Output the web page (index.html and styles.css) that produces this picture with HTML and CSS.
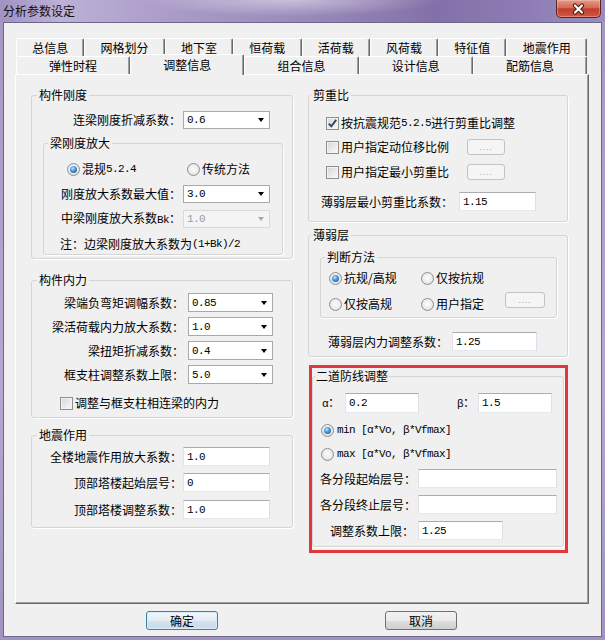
FILE: index.html
```html
<!DOCTYPE html>
<html lang="zh-CN">
<head>
    <meta charset="UTF-8">
    <title>分析参数设定</title>
    <link rel="stylesheet" href="styles.css">
</head>
<body>
<div class="window">
    <div class="titlebar">
        <span class="title">分析参数设定</span>
        <button class="close" type="button">
            <svg width="17" height="12" viewBox="0 0 17 12">
                <path d="M5 2.5 L12 9.5 M12 2.5 L5 9.5" stroke="#4a1610" stroke-width="4.2" stroke-linecap="round"/>
                <path d="M5 2.5 L12 9.5 M12 2.5 L5 9.5" stroke="#fff" stroke-width="2.2" stroke-linecap="round"/>
            </svg>
        </button>
    </div>

    <div class="client">
        <div class="tabstrip">
            <div class="tabrow">
                <div class="tab">总信息</div>
                <div class="tab wide">网格划分</div>
                <div class="tab">地下室</div>
                <div class="tab">恒荷载</div>
                <div class="tab">活荷载</div>
                <div class="tab">风荷载</div>
                <div class="tab">特征值</div>
                <div class="tab wide">地震作用</div>
            </div>
            <div class="tabrow">
                <div class="tab">弹性时程</div>
                <div class="tab on">调整信息</div>
                <div class="tab">组合信息</div>
                <div class="tab">设计信息</div>
                <div class="tab">配筋信息</div>
            </div>
        </div>

        <div class="panel">
            <!-- left column -->
            <div class="col-left">
                <fieldset class="grp">
                    <legend>构件刚度</legend>
                    <div class="row h18 mt9">
                        <span class="lbl w149">连梁刚度折减系数：</span>
                        <div class="combo w87 ml2"><span class="val">0.6</span><i></i></div>
                    </div>
                    <fieldset class="grp sub beam">
                        <legend>梁刚度放大</legend>
                        <div class="row h16 mt11 pl23">
                            <label class="opt w120"><span class="radio on"></span>混规<span class="en">5.2.4</span></label>
                            <label class="opt"><span class="radio"></span>传统方法</label>
                        </div>
                        <div class="row h18 mt8">
                            <span class="lbl w137">刚度放大系数最大值：</span>
                            <div class="combo w87 ml2"><span class="val">3.0</span><i></i></div>
                        </div>
                        <div class="row h18 mt7">
                            <span class="lbl w137">中梁刚度放大系数<span class="en">Bk</span>：</span>
                            <div class="combo w87 ml2 disabled"><span class="val">1.0</span><i></i></div>
                        </div>
                        <div class="row h16 mt8 pl16">注：边梁刚度放大系数为<span class="en">(1+Bk)/2</span></div>
                    </fieldset>
                </fieldset>

                <fieldset class="grp mt14 pb6">
                    <legend>构件内力</legend>
                    <div class="row h19 mt6">
                        <span class="lbl w152">梁端负弯矩调幅系数：</span>
                        <div class="combo w85 ml4 h19"><span class="val">0.85</span><i></i></div>
                    </div>
                    <div class="row h19 mt5">
                        <span class="lbl w152">梁活荷载内力放大系数：</span>
                        <div class="combo w85 ml4 h19"><span class="val">1.0</span><i></i></div>
                    </div>
                    <div class="row h19 mt5">
                        <span class="lbl w152">梁扭矩折减系数：</span>
                        <div class="combo w85 ml4 h19"><span class="val">0.4</span><i></i></div>
                    </div>
                    <div class="row h19 mt5">
                        <span class="lbl w152">框支柱调整系数上限：</span>
                        <div class="combo w85 ml4 h19"><span class="val">5.0</span><i></i></div>
                    </div>
                    <div class="row h16 mt11 pl28">
                        <label class="opt"><span class="check"></span>调整与框支柱相连梁的内力</label>
                    </div>
                </fieldset>

                <fieldset class="grp mt10 pb8">
                    <legend>地震作用</legend>
                    <div class="row h19 mt5">
                        <span class="lbl w150">全楼地震作用放大系数：</span>
                        <div class="edit w87 ml1"><span class="val">1.0</span></div>
                    </div>
                    <div class="row h19 mt7">
                        <span class="lbl w150">顶部塔楼起始层号：</span>
                        <div class="edit w87 ml1"><span class="val">0</span></div>
                    </div>
                    <div class="row h19 mt8">
                        <span class="lbl w150">顶部塔楼调整系数：</span>
                        <div class="edit w87 ml1"><span class="val">1.0</span></div>
                    </div>
                </fieldset>
            </div>

            <!-- right column -->
            <div class="col-right">
                <fieldset class="grp pb10">
                    <legend>剪重比</legend>
                    <div class="row h18 mt12 pl17">
                        <label class="opt"><span class="check"><svg width="11" height="11" viewBox="0 0 11 11"><path d="M1.8 5.6 L4.3 8.3 L9.2 1.9" fill="none" stroke="#34426e" stroke-width="1.9"/></svg></span>按抗震规范<span class="en">5.2.5</span>进行剪重比调整</label>
                    </div>
                    <div class="row h18 mt6 pl17">
                        <label class="opt w141"><span class="check"></span>用户指定动位移比例</label>
                        <span class="dots">....</span>
                    </div>
                    <div class="row h18 mt7 pl17">
                        <label class="opt w141"><span class="check"></span>用户指定最小剪重比</label>
                        <span class="dots">....</span>
                    </div>
                    <div class="row h19 mt11 pl12">
                        <span>薄弱层最小剪重比系数：</span>
                        <div class="edit w77 ml6"><span class="val">1.15</span></div>
                    </div>
                </fieldset>

                <fieldset class="grp mt6 pb5">
                    <legend>薄弱层</legend>
                    <fieldset class="grp sub judge">
                        <legend>判断方法</legend>
                        <div class="row h16 mt6 pl8">
                            <label class="opt w92"><span class="radio on"></span>抗规/高规</label>
                            <label class="opt"><span class="radio"></span>仅按抗规</label>
                        </div>
                        <div class="row h16 mt10 pl8">
                            <label class="opt w92"><span class="radio"></span>仅按高规</label>
                            <label class="opt w84"><span class="radio"></span>用户指定</label>
                            <span class="dots wide">....</span>
                        </div>
                    </fieldset>
                    <div class="row h19 mt14 pl19">
                        <span>薄弱层内力调整系数：</span>
                        <div class="edit w85 ml4"><span class="val">1.25</span></div>
                    </div>
                </fieldset>

                <div class="mark">
                    <fieldset class="grp second">
                        <legend>二道防线调整</legend>
                        <div class="row h20 mt10 pl9">
                            <span class="greek"><span class="en">α</span>：</span>
                            <div class="edit w74 h20"><span class="val">0.2</span></div>
                            <span class="greek b"><span class="en">β</span>：</span>
                            <div class="edit w74 h20"><span class="val">1.5</span></div>
                        </div>
                        <div class="row h16 mt9 pl8">
                            <label class="opt"><span class="radio on"></span><span class="en sp">min [α*Vo, β*Vfmax]</span></label>
                        </div>
                        <div class="row h16 mt8 pl8">
                            <label class="opt"><span class="radio"></span><span class="en sp">max [α*Vo, β*Vfmax]</span></label>
                        </div>
                        <div class="row h19 mt7 pl7">
                            <span class="lbl w96">各分段起始层号：</span>
                            <div class="edit w139 ml2"></div>
                        </div>
                        <div class="row h19 mt7 pl7">
                            <span class="lbl w96">各分段终止层号：</span>
                            <div class="edit w139 ml2"></div>
                        </div>
                        <div class="row h19 mt7 pl17">
                            <span class="lbl w84">调整系数上限：</span>
                            <div class="edit w85 ml4"><span class="val">1.25</span></div>
                        </div>
                    </fieldset>
                </div>
            </div>
        </div>

        <div class="actions">
            <button class="btn default" type="button">确定</button>
            <button class="btn cancel" type="button">取消</button>
        </div>
    </div>
</div>
</body>
</html>
```

FILE: styles.css
```css
body {
    margin: 0;
    font-family: "Noto Sans CJK SC", "Liberation Sans", sans-serif;
    font-size: 12px;
    line-height: 16px;
    color: #000;
    overflow: hidden;
}

.window {
    width: 605px;
    height: 640px;
    display: flex;
    flex-direction: column;
    background: linear-gradient(to bottom, #a597c4, #b4a8d0 60%, #a093c2);
}

/* title bar */
.titlebar {
    height: 22px;
    flex: none;
    display: flex;
    justify-content: space-between;
    align-items: flex-start;
    background:
        radial-gradient(ellipse 200px 22px at 290px 0, rgba(255, 255, 255, 0.45), rgba(255, 255, 255, 0) 75%),
        linear-gradient(to right, #a092c2 0%, #bdb1d7 10%, #aa9bc8 28%, #9a8aba 50%, #8470a8 72%, #8e7eb5 88%, #9a8dbf 100%);
}

.title {
    padding: 4px 0 0 3px;
    line-height: 14px;
    color: #111;
}

.close {
    width: 45px;
    height: 18px;
    margin: 0 4px 0 0;
    padding: 0;
    border: 1px solid #5b2620;
    border-top: none;
    border-radius: 0 0 5px 5px;
    background: linear-gradient(#e39a8a, #d56a55 45%, #c13c2c 52%, #d0583f 100%);
    box-shadow: inset 0 0 0 1px rgba(255, 220, 210, 0.35);
    display: flex;
    align-items: center;
    justify-content: center;
}

.client {
    flex: 1;
    margin: 0 3px 3px;
    background: #f0f0f0;
    border: 1px solid #6e6689;
}

/* tabs */
.tabstrip {
    padding: 15px 0 0 12px;
    width: 571px;
}

.tabrow {
    display: flex;
    height: 18px;
}

.tab {
    flex: 68 0 0;
    box-sizing: border-box;
    height: 18px;
    border: 1px solid;
    border-color: #fff #696969 transparent #fff;
    border-bottom: none;
    border-radius: 2px 2px 0 0;
    box-shadow: inset -1px 0 0 #a0a0a0;
    text-align: center;
    line-height: 17px;
    background: #f0f0f0;
}

.tab.wide {
    flex: 80.5 0 0;
}

.tabrow + .tabrow .tab {
    flex: 1 0 0;
}

.tab.on {
    position: relative;
    z-index: 1;
    height: 21px;
    margin-top: -2px;
    line-height: 19px;
}

/* panel */
.panel {
    margin-left: 11px;
    width: 574px;
    height: 530px;
    box-sizing: border-box;
    border: 1px solid;
    border-color: #fff #696969 #696969 #fff;
    box-shadow: inset -1px -1px 0 #a0a0a0;
    display: flex;
    padding: 13px 0 0 15px;
}

.col-left {
    width: 262px;
}

.col-right {
    width: 260px;
    margin-left: 15px;
}

.grp {
    margin: 0;
    padding: 0;
    border: 1px solid #d5d5d5;
    border-radius: 3px;
    box-shadow: 1px 1px 0 #fff;
    min-inline-size: 0;
}

.grp > legend {
    margin-left: 5px;
    padding: 0 2px;
    line-height: 14px;
}

.col-right .grp > legend {
    margin-left: 2px;
}

.grp.sub > legend {
    margin-left: 4px;
}

.col-left > .grp:first-child {
    padding-bottom: 3px;
}

.beam {
    width: 240px;
    margin: 7px 0 0 11px;
    padding-bottom: 2px;
    box-sizing: border-box;
}

.judge {
    width: 237px;
    margin: 8px 0 0 11px;
    padding-bottom: 5px;
    box-sizing: border-box;
}

.mark {
    margin: 8px 0 0 1px;
    width: 259px;
    box-sizing: border-box;
    border: 3px solid #e0393c;
    padding-bottom: 3px;
}

.second {
    margin: 1px 1px 0 0;
    padding-bottom: 6px;
}

.second > legend {
    margin-left: 0;
    padding: 0 1px;
}

/* rows */
.row {
    display: flex;
    align-items: center;
}

.lbl {
    text-align: right;
    white-space: nowrap;
    flex: none;
}

.opt {
    display: flex;
    align-items: center;
    white-space: nowrap;
    flex: none;
}

.en,
.val {
    font-family: "Liberation Mono", "DejaVu Sans Mono", monospace;
    font-size: 11px;
    letter-spacing: -0.6px;
}

.en.sp {
    margin-left: 1px;
}

.greek {
    width: 23px;
    flex: none;
}

.greek.b {
    width: 21px;
    margin-left: 38px;
}

/* controls */
.combo {
    height: 18px;
    box-sizing: border-box;
    border: 1px solid #a9a9a9;
    background: #fff;
    display: flex;
    align-items: center;
    justify-content: space-between;
    padding: 0 5px 0 3px;
    flex: none;
}

.combo i {
    width: 0;
    height: 0;
    border-left: 3.5px solid transparent;
    border-right: 3.5px solid transparent;
    border-top: 4px solid #000;
}

.combo.disabled {
    background: #f4f4f4;
    border-color: #d9d9d9;
    color: #9a9a9a;
}

.combo.disabled i {
    border-top-color: #a8a8a8;
}

.edit {
    height: 19px;
    box-sizing: border-box;
    border: 1px solid;
    border-color: #abadb3 #dbdfe6 #e3e9ef #e2e3ea;
    background: #fff;
    padding: 0 3px;
    display: flex;
    align-items: center;
    flex: none;
}

.radio {
    width: 13px;
    height: 13px;
    box-sizing: border-box;
    border-radius: 50%;
    border: 1px solid #8f8f8f;
    background: radial-gradient(circle at 50% 45%, #fdfdfd 0, #ebebeb 55%, #cfcfcf 100%);
    display: inline-flex;
    align-items: center;
    justify-content: center;
    margin-right: 2px;
    flex: none;
}

.radio.on::after {
    content: "";
    width: 7px;
    height: 7px;
    border-radius: 50%;
    background: radial-gradient(circle at 40% 35%, #c2e6ff 0, #4b9ce0 40%, #14487f 100%);
}

.check {
    width: 13px;
    height: 13px;
    box-sizing: border-box;
    border: 1px solid #8f8f8f;
    background: linear-gradient(135deg, #d6d6d6, #fafafa);
    box-shadow: inset 0 0 0 1px #f3f3f3;
    margin-right: 2px;
    display: inline-flex;
    align-items: center;
    justify-content: center;
    flex: none;
}

.dots {
    width: 38px;
    height: 16px;
    box-sizing: border-box;
    border: 1px solid #c2c2c2;
    border-radius: 3px;
    background: #f5f5f5;
    color: #a8a8a8;
    font-size: 8px;
    letter-spacing: 1px;
    line-height: 10px;
    display: flex;
    align-items: center;
    justify-content: center;
    flex: none;
}

.dots.wide {
    width: 40px;
    margin-top: -8px;
}

/* dialog buttons */
.actions {
    display: flex;
    padding: 7px 0 0 142px;
}

.btn {
    width: 72px;
    height: 19px;
    box-sizing: border-box;
    border: 1px solid #707070;
    border-radius: 3px;
    background: linear-gradient(#f2f2f2 0%, #ebebeb 50%, #dddddd 51%, #cfcfcf 100%);
    font: inherit;
    line-height: 16px;
    padding: 0;
    color: #000;
}

.btn.default {
    border-color: #3c7fb1;
    background: linear-gradient(#f1f7fb 0%, #e3edf5 50%, #d3e2ee 51%, #cbdbe8 100%);
    box-shadow: inset 0 0 0 1px #d8ecfa;
}

.btn.cancel {
    margin-left: 167px;
}

/* sizes */
.h16 { height: 16px; }
.h18 { height: 18px; }
.h19 { height: 19px; }
.h20 { height: 20px; }

.mt5 { margin-top: 5px; }
.mt6 { margin-top: 6px; }
.mt7 { margin-top: 7px; }
.mt8 { margin-top: 8px; }
.mt9 { margin-top: 9px; }
.mt10 { margin-top: 10px; }
.mt11 { margin-top: 11px; }
.mt12 { margin-top: 12px; }
.mt14 { margin-top: 14px; }

.pb5 { padding-bottom: 5px; }
.pb6 { padding-bottom: 6px; }
.pb8 { padding-bottom: 8px; }
.pb10 { padding-bottom: 10px; }

.pl7 { padding-left: 7px; }
.pl8 { padding-left: 8px; }
.pl9 { padding-left: 9px; }
.pl12 { padding-left: 12px; }
.pl16 { padding-left: 16px; }
.pl17 { padding-left: 17px; }
.pl19 { padding-left: 19px; }
.pl23 { padding-left: 23px; }
.pl28 { padding-left: 28px; }

.ml1 { margin-left: 1px; }
.ml2 { margin-left: 2px; }
.ml4 { margin-left: 4px; }
.ml6 { margin-left: 6px; }

.w74 { width: 74px; }
.w77 { width: 77px; }
.w84 { width: 84px; }
.w85 { width: 85px; }
.w87 { width: 87px; }
.w92 { width: 92px; }
.w96 { width: 96px; }
.w120 { width: 120px; }
.w137 { width: 137px; }
.w139 { width: 139px; }
.w141 { width: 141px; }
.w149 { width: 149px; }
.w150 { width: 150px; }
.w152 { width: 152px; }
```
